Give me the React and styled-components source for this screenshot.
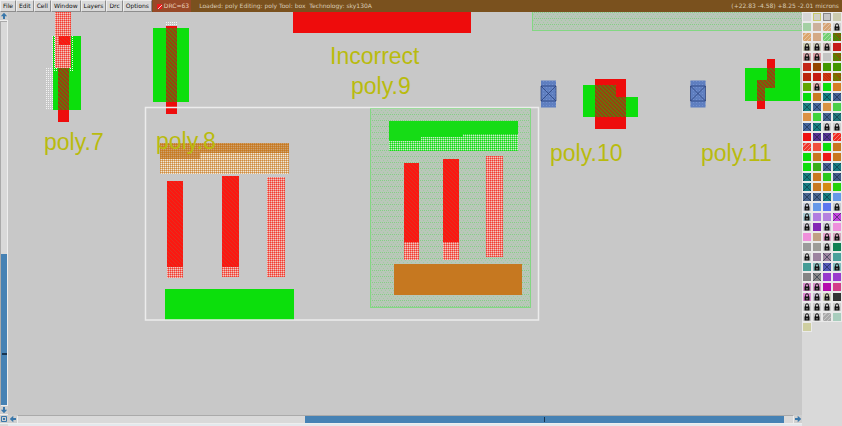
import React from "react";
import styled, { createGlobalStyle, css } from "styled-components";

const Global = createGlobalStyle`
  * { box-sizing: border-box; }
  body { margin: 0; background: #d9d9d9; font-family: "DejaVu Sans", sans-serif; }
  button { margin: 0; padding: 0; border: 0; border-radius: 0; font: inherit; }
`;

const Page = styled.div`
  display: flex;
  flex-direction: column;
  height: 100vh;
  overflow: hidden;
`;

const TitleBar = styled.header`
  display: flex;
  flex: none;
  height: 12px;
  background: #7a511e;
  color: #d9cbb5;
  font-size: 6px;
  line-height: 10px;
  white-space: pre;
`;

const MenuBar = styled.nav`
  display: flex;
`;

const MenuButton = styled.button`
  padding: 0 2px;
  border: 1px solid #eee;
  border-right-color: #8d8d8d;
  border-bottom-color: #8d8d8d;
  background: #d9d9d9;
  color: #111;
`;

const DrcToggle = styled.label`
  display: flex;
  align-items: center;
  gap: 2px;
  margin-left: 1px;
  padding: 0 2px 0 4px;
  background: #984827;
  color: #e8d0bc;
`;

const DrcCheck = styled.input`
  appearance: none;
  width: 5px;
  height: 5px;
  margin: 0;
  background: #e81c1c;
  &:checked {
    background: linear-gradient(135deg, #e81c1c 50%, #ffc4c4 51% 62%, #e81c1c 63%);
  }
`;

const Status = styled.div`
  display: flex;
  flex: 1;
  align-items: center;
  justify-content: space-between;
  padding: 0 3px 0 8px;
`;

const Body = styled.main`
  display: flex;
  flex: 1;
  min-height: 0;
`;

const Workspace = styled.div`
  display: grid;
  flex: 1;
  min-width: 0;
  grid-template-columns: 8px 1fr;
  grid-template-rows: 1fr 11px;
`;

const Canvas = styled.svg`
  display: block;
  width: 100%;
  height: 100%;
  min-height: 0;
  background: #c8c8c8;
  text {
    font-family: "Liberation Sans", Arial, sans-serif;
    font-size: 23px;
    fill: #b9bb0e;
  }
`;

const Scroller = styled.div`
  display: flex;
  min-width: 0;
  min-height: 0;
  flex-direction: ${(p) => (p.$vertical ? "column" : "row")};
  background: #d9d9d9;
  ${(p) => (p.$vertical ? css`border-right: 1px solid #eee;` : css`border-bottom: 2px solid #e3e9ed;`)}
`;

const Trough = styled.div`
  display: flex;
  flex: 1;
  flex-direction: inherit;
  border: 1px solid #eee;
  border-top-color: #aaa;
  ${(p) => p.$vertical && css`border-width: 1px 0; border-left: 1px solid #aaa;`}
`;

const Space = styled.div`
  flex: ${(p) => p.$grow} 0 0;
`;

const Thumb = styled.div`
  display: flex;
  flex-direction: inherit;
  align-items: center;
  flex: ${(p) => p.$grow} 0 0;
  background: #4682b4;
`;

const Mark = styled.div`
  width: ${(p) => (p.$vertical ? 5 : 1)}px;
  height: ${(p) => (p.$vertical ? 2 : 5)}px;
  background: #183450;
`;

const ToolButton = styled.button`
  display: flex;
  flex: none;
  align-items: center;
  justify-content: center;
  width: ${(p) => p.$w || 8}px;
  height: 9px;
  background: #cfcfcf;
  border-bottom: 1px solid #eee;
`;

const Palette = styled.aside`
  display: grid;
  flex: none;
  align-content: start;
  grid-template-columns: repeat(4, 10px);
  grid-auto-rows: 10px;
  background: #d9d9d9;
`;

const hatches = {
  cross: "linear-gradient(45deg, transparent 44%, #1238 45% 55%, transparent 56%), linear-gradient(-45deg, transparent 44%, #1238 45% 55%, transparent 56%)",
  stripe: "repeating-linear-gradient(135deg, transparent 0 2px, #eee6 2px 3px)",
  mix: "repeating-linear-gradient(45deg, transparent 0 1px, #b62c08aa 1px 2px)",
};

const Swatch = styled.button`
  display: flex;
  align-items: center;
  justify-content: center;
  width: 10px;
  height: 10px;
  border: 1px solid #eaeaea;
  background-color: ${(p) => p.$color};
  background-image: ${(p) => hatches[p.$hatch] || "none"};
  ${(p) => p.$ring && css`box-shadow: inset 0 0 0 1px ${p.$ring};`}
`;

const Lock = () => (
  <svg width="8" height="8" viewBox="0 0 8 8" aria-hidden="true">
    <path d="M2.5 4V2.3a1.5 1.5 0 0 1 3 0V4" fill="none" stroke="#111" />
    <path d="M1.5 3.5h5v4h-5z" fill="#111" />
    <path d="M3.6 5h.8v1.4h-.8z" fill="#eee" />
  </svg>
);

const turns = { up: 0, right: 90, down: 180, left: 270 };
const Arrow = ({ dir }) => (
  <svg width="8" height="8" viewBox="0 0 8 8" aria-hidden="true">
    <path d="M4 .8 7.2 4.3H5V7H3V4.3H.8z" fill="#3977aa" transform={`rotate(${turns[dir]} 4 4)`} />
  </svg>
);

// Each entry is "colour[:hatch]"; L marks a locked layer, R an outlined one.
const layers = `
d6d6d6 d0d0c5:R:c9c96b c5c5c5:R:888888 cbcbaf
a4d0a4 ccb09b d6a374:stripe d0d0d0:L
dca56c:stripe d4aa85 71d071:stripe 399304:mix
c8c8af:L c4c4b4:L c9b8b5:L c51b19
cfa0a5:L d598a0:L c4c4c4 479200:mix
c42518 944400 409800 409600
bd2110:mix c51b14 ce3515:mix 628800:mix
62a500 d6a0a0:L 0ce00c d47d24
08dd0c c97b20 118080:cross 435f93:cross
188181:cross 46649a:cross d99242 49cf49
dc9143 40d43b 41608f:cross 20757c:cross
43619a:cross 168080:cross cccccc:L cccccc:L
ee1010 553090:cross 543091:cross f12a22:stripe
f0362b:stripe f0503d 0cdf0c c7771e
08de08 c77820 ed1818 c87820
0ddd0c 38ae19 465d91:cross 17797f:cross
147c7c:cross c97720 28c91c 405988:cross
147b80:cross c87821 d48c17 24d20b
46628f:cross 49648d:cross 147e80:cross 6699e8
c9cedb:L 6699e8 5d77ef c8c8cd:L
a9c9d2:L b17ce0 b581df c344dc:cross
c9c5cf:L 8427b5 c9c6d2:L ee90dc
ef8fda c0a184 e4a3cc:L d3a6bc:L
9b9b9b 9d9d98 c8c8c8:L 118053
cccccc:L 9d84a0 9c83a0:cross 4aa19b
459d96 85b9b7:L 5257b6:cross 81bcbc:L
858585 868686:cross 9839cd 9a3ccd
d58aca:L d28fc6:L b50cad d33f89
dd89d1:L c7bdd0:L cbcbb5:L 333333
cccccc:L cccccc:L cccccc:L cccccc:L
c9c9c9:L cbcbcb:L a9a9a9:stripe a8cdbd
cecea0`.trim().split(/\s+/).map((s) => s.split(":"));

const Box = ({ x, y, w, h, fill }) => <rect x={x} y={y} width={w} height={h} fill={fill} />;

const Contact = ({ x, y }) => (
  <g>
    <Box x={x} y={y} w="15" h="27" fill="#5f7fc0" />
    <Box x={x} y={y} w="15" h="27" fill="url(#blueDots)" />
    <path d={`M${x} ${y + 5.5}h15v15h-15zl15 15m0-15l-15 15`} fill="none" stroke="#263c75" strokeWidth=".7" />
  </g>
);

const GREEN = "#0cdf0c";
const RED = "#ee0c0c";

// A woven stipple: a 4px tile with light threads and bright crossings.
const Weave = ({ id, base, thread, knot }) => (
  <pattern id={id} width="4" height="4" patternUnits="userSpaceOnUse">
    <rect width="4" height="4" fill={base} />
    <path d="M0 1h4v1H0zM1 0h1v4H1zM3 0h1v4H3zM0 3h4v1H0z" fill={thread} />
    <path d="M1 1h1v1H1zM3 1h1v1H3zM1 3h1v1H1zM3 3h1v1H3z" fill={knot} />
  </pattern>
);

const Layout = () => (
  <Canvas role="img" aria-label="Chip layout">
    <defs>
      <pattern id="hatch" width="4" height="4" patternUnits="userSpaceOnUse">
        <rect width="4" height="4" fill="#5f7a0c" />
        <path d="M-1-1l6 6M-1 3l2 2M3-1l2 2" stroke="#a8340e" strokeWidth="1.3" />
      </pattern>
      <pattern id="redHatch" width="4" height="4" patternUnits="userSpaceOnUse">
        <rect width="4" height="4" fill="#fb1811" />
        <path d="M-1-1l6 6M-1 3l2 2M3-1l2 2" stroke="#e03122" strokeWidth="1" />
      </pattern>
      <Weave id="redGrid" base="#f23c31" thread="#f27d72" knot="#f0c8c2" />
      <Weave id="orangeGrid" base="#cf8a40" thread="#dbb17c" knot="#f0e8dc" />
      <Weave id="orangeDense" base="#c67820" thread="#ca8638" knot="#cda372" />
      <Weave id="greenGrid" base="#14dd14" thread="#5fe05f" knot="#c8efc8" />
      <pattern id="mint" width="4" height="6" patternUnits="userSpaceOnUse">
        <rect width="4" height="6" fill="#b9c7b9" />
        <path d="M0 0h1v1H0zM2 0h1v1H2z" fill="#84d084" />
        <path d="M1 2h1v1H1zM3 4h1v1H3z" fill="#a0cca0" />
      </pattern>
      <pattern id="whiteDots" width="2" height="2" patternUnits="userSpaceOnUse">
        <rect width="1" height="1" fill="#f4f4f4" />
      </pattern>
      <pattern id="blueDots" width="3" height="3" patternUnits="userSpaceOnUse">
        <rect width="1" height="1" fill="#7490cf" />
      </pattern>
    </defs>
    <g transform="translate(-8 -12)">
      <Box x="53" y="36" w="28" h="74" fill={GREEN} />
      <Box x="52" y="36" w="22" h="35" fill="url(#whiteDots)" />
      <Box x="46" y="68" w="7" h="42" fill="url(#whiteDots)" />
      <Box x="55" y="12" w="16" h="56" fill="url(#redGrid)" />
      <Box x="59" y="36" w="11" h="9" fill="url(#redHatch)" />
      <Box x="58" y="68" w="11" h="54" fill={RED} />
      <Box x="58" y="68" w="11" h="42" fill="url(#hatch)" />

      <Box x="153" y="28" w="36" h="74" fill={GREEN} />
      <Box x="166" y="26" w="11" h="88" fill={RED} />
      <Box x="166" y="28" w="11" h="74" fill="url(#hatch)" />
      <Box x="166" y="22" w="11" h="4" fill="url(#whiteDots)" />

      <Box x="293" y="12" w="178" h="21" fill={RED} />
      <rect x="532.5" y="8.5" width="280" height="22" fill="url(#mint)" stroke="#83d783" />
      <rect x="370.5" y="108.5" width="160" height="199" fill="url(#mint)" stroke="#83d783" />

      <Box x="389" y="121" w="129" h="30" fill="url(#greenGrid)" />
      <path d="M389 121h129v13h-55v3h-42v4h-32z" fill="#16dc16" />
      <Box x="404" y="163" w="15" h="97" fill="url(#redGrid)" />
      <Box x="404" y="163" w="15" h="79" fill="url(#redHatch)" />
      <Box x="443" y="159" w="16" h="101" fill="url(#redGrid)" />
      <Box x="443" y="159" w="16" h="83" fill="url(#redHatch)" />
      <Box x="486" y="156" w="17" h="101" fill="url(#redGrid)" />
      <Box x="394" y="264" w="128" h="31" fill="#c67820" />

      <Box x="160" y="143" w="129" h="31" fill="url(#orangeGrid)" />
      <path d="M160 143h129v10h-89v6h-40z" fill="url(#orangeDense)" />
      <Box x="167" y="181" w="16" h="97" fill="url(#redGrid)" />
      <Box x="167" y="181" w="16" h="86" fill="url(#redHatch)" />
      <Box x="222" y="176" w="17" h="101" fill="url(#redGrid)" />
      <Box x="222" y="176" w="17" h="91" fill="url(#redHatch)" />
      <Box x="267" y="177" w="18" h="100" fill="url(#redGrid)" />
      <Box x="165" y="289" w="129" h="31" fill={GREEN} />
      <rect x="145.5" y="107.5" width="393" height="212.5" fill="none" stroke="#ececec" strokeWidth="1.5" />

      <Contact x={541} y={80.5} />
      <Contact x={690.5} y={80.5} />

      <Box x="595" y="79" w="31" h="50" fill={RED} />
      <path d="M583 85h12v32h-12zM626 97h12v20h-12z" fill={GREEN} />
      <path d="M595 85h21v12h10v20h-31z" fill="url(#hatch)" />

      <Box x="745" y="68" w="55" h="33" fill={GREEN} />
      <path d="M767 59h8v29h-10v21h-8v-29h10z" fill={RED} />
      <path d="M767 68h8v20h-10v13h-8v-21h10z" fill="url(#hatch)" />

      <text x="44" y="150">poly.7</text>
      <text x="156" y="149">poly.8</text>
      <text x="330" y="64">Incorrect</text>
      <text x="351" y="94">poly.9</text>
      <text x="550" y="161">poly.10</text>
      <text x="701" y="161">poly.11</text>
    </g>
  </Canvas>
);

export default function App() {
  return (
    <Page>
      <Global />
      <TitleBar>
        <MenuBar>
          {["File", "Edit", "Cell", "Window", "Layers", "Drc", "Options"].map((m) => (
            <MenuButton key={m}>{m}</MenuButton>
          ))}
        </MenuBar>
        <DrcToggle>
          <DrcCheck type="checkbox" defaultChecked />
          DRC=63
        </DrcToggle>
        <Status>
          <span>Loaded: poly Editing: poly Tool: box  Technology: sky130A</span>
          <span>(+22.83 -4.58) +8.25 -2.01 microns</span>
        </Status>
      </TitleBar>
      <Body>
        <Workspace>
          <Scroller $vertical>
            <ToolButton aria-label="Scroll up"><Arrow dir="up" /></ToolButton>
            <Trough $vertical>
              <Space $grow={233} />
              <Thumb $grow={152}>
                <Space $grow={2} />
                <Mark $vertical />
                <Space $grow={1} />
              </Thumb>
            </Trough>
            <ToolButton aria-label="Scroll down"><Arrow dir="down" /></ToolButton>
          </Scroller>
          <Layout />
          <ToolButton aria-label="Fit view">
            <svg width="8" height="8" viewBox="0 0 8 8" aria-hidden="true">
              <path d="M1.5 1.5h5v5h-5z" fill="none" stroke="#3977aa" />
              <path d="M3 3h2v2H3z" fill="#3977aa" />
            </svg>
          </ToolButton>
          <Scroller>
            <ToolButton aria-label="Scroll left" $w={9}><Arrow dir="left" /></ToolButton>
            <Trough>
              <Space $grow={287} />
              <Thumb $grow={479}>
                <Space $grow={1} />
                <Mark />
                <Space $grow={1} />
              </Thumb>
              <Space $grow={9} />
            </Trough>
            <ToolButton aria-label="Scroll right"><Arrow dir="right" /></ToolButton>
          </Scroller>
        </Workspace>
        <Palette>
          {layers.map(([color, kind, ring], i) => (
            <Swatch
              key={i}
              aria-label={`Layer ${i + 1}`}
              $color={`#${color}`}
              $hatch={kind}
              $ring={kind === "R" ? `#${ring}` : undefined}
            >
              {kind === "L" && <Lock />}
            </Swatch>
          ))}
        </Palette>
      </Body>
    </Page>
  );
}
